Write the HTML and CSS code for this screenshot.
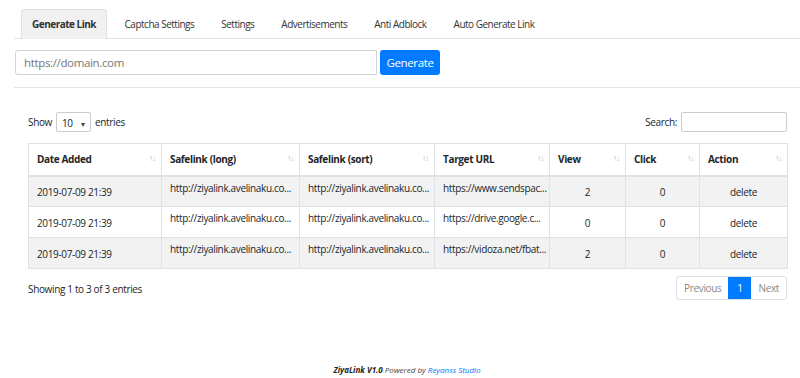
FILE: index.html
```html
<!DOCTYPE html>
<html>
<head>
<meta charset="utf-8">
<link rel="stylesheet" href="styles.css">
</head>
<body>
<div class="page">
  <ul class="tabs">
    <li class="tab active">Generate Link</li>
    <li class="tab">Captcha Settings</li>
    <li class="tab">Settings</li>
    <li class="tab">Advertisements</li>
    <li class="tab">Anti Adblock</li>
    <li class="tab">Auto Generate Link</li>
  </ul>
  <div class="gen-row">
    <div class="url-input">https://domain.com</div>
    <div class="btn-generate">Generate</div>
  </div>
  <div class="divider"></div>
  <div class="dt">
    <div class="dt-top">
      <div class="length">Show <span class="select">10 <span class="caret">&#9662;</span></span> entries</div>
      <div class="search">Search: <span class="search-input"></span></div>
    </div>
    <table class="grid">
      <colgroup>
        <col class="c1"><col class="c2"><col class="c3"><col class="c4"><col class="c5"><col class="c6"><col class="c7">
      </colgroup>
      <thead>
        <tr>
          <th><span>Date Added</span><span class="sort">↑↓</span></th>
          <th><span>Safelink (long)</span><span class="sort">↑↓</span></th>
          <th><span>Safelink (sort)</span><span class="sort">↑↓</span></th>
          <th><span>Target URL</span><span class="sort">↑↓</span></th>
          <th><span>View</span><span class="sort">↑↓</span></th>
          <th><span>Click</span><span class="sort">↑↓</span></th>
          <th><span>Action</span><span class="sort">↑↓</span></th>
        </tr>
      </thead>
      <tbody>
        <tr class="odd">
          <td class="date">2019-07-09 21:39</td>
          <td class="url">http://ziyalink.avelinaku.co...</td>
          <td class="url">http://ziyalink.avelinaku.co...</td>
          <td class="url">https://www.sendspac...</td>
          <td class="num">2</td>
          <td class="num">0</td>
          <td class="num">delete</td>
        </tr>
        <tr>
          <td class="date">2019-07-09 21:39</td>
          <td class="url">http://ziyalink.avelinaku.co...</td>
          <td class="url">http://ziyalink.avelinaku.co...</td>
          <td class="url">https://drive.google.c...</td>
          <td class="num">0</td>
          <td class="num">0</td>
          <td class="num">delete</td>
        </tr>
        <tr class="odd">
          <td class="date">2019-07-09 21:39</td>
          <td class="url">http://ziyalink.avelinaku.co...</td>
          <td class="url">http://ziyalink.avelinaku.co...</td>
          <td class="url">https://vidoza.net/fbat...</td>
          <td class="num">2</td>
          <td class="num">0</td>
          <td class="num">delete</td>
        </tr>
      </tbody>
    </table>
    <div class="dt-bottom">
      <div class="info">Showing 1 to 3 of 3 entries</div>
      <div class="pager">
        <span class="pg">Previous</span><span class="pg current">1</span><span class="pg">Next</span>
      </div>
    </div>
  </div>
  <div class="footer"><b>ZiyaLink V1.0</b> Powered by <span class="brand">Reyanss Studio</span></div>
</div>
</body>
</html>
```
FILE: styles.css
```css
* { box-sizing: border-box; }
html, body { margin: 0; padding: 0; background: #fff; }
body {
  font-family: "Open Sans", "Noto Sans", sans-serif;
  font-size: 10px;
  letter-spacing: -0.35px;
  color: #212529;
  width: 800px;
  height: 378px;
  overflow: hidden;
}
.page { padding-top: 9px; }
.tabs {
  list-style: none;
  margin: 0 0 0 14px;
  padding: 0 0 0 7px;
  display: flex;
  border-bottom: 1px solid #dee2e6;
  height: 30px;
  letter-spacing: -0.5px;
}
.tab {
  height: 30px;
  padding: 0 12.5px;
  line-height: 28px;
  border: 1px solid transparent;
  border-bottom: none;
  border-radius: 3px 3px 0 0;
  color: #333;
}
.tab.active {
  background: #f1f1f1;
  border-color: #dee2e6;
  font-weight: 700;
  padding: 0 10px;
  margin-right: 4px;
}
.gen-row {
  display: flex;
  margin: 11px 0 0 15px;
  height: 25px;
}
.url-input {
  width: 362px;
  height: 25px;
  border: 1px solid #ced4da;
  border-radius: 3px 0 0 3px;
  color: #777;
  font-size: 11.5px;
  line-height: 23px;
  padding-left: 8px;
}
.btn-generate {
  margin-left: 3px;
  width: 60px;
  height: 25px;
  background: #007bff;
  color: #fff;
  border-radius: 3px;
  font-size: 11.5px;
  line-height: 25px;
  text-align: center;
}
.divider {
  margin: 12px 0 0 14px;
  border-top: 1px solid #e5e5e5;
}
.dt { padding: 24px 13px 0 28px; }
.dt-top {
  display: flex;
  justify-content: space-between;
  align-items: center;
  height: 20px;
}
.length { display: flex; align-items: center; gap: 4px; }
.select {
  display: inline-flex;
  align-items: center;
  justify-content: space-between;
  width: 35px;
  height: 20px;
  border: 1px solid #ccc;
  border-radius: 2px;
  padding: 2px 5px 0 5px;
  font-size: 10px;
}
.caret { font-size: 8px; color: #444; }
.search { display: flex; align-items: center; gap: 4px; }
.search-input {
  width: 106px;
  height: 20px;
  border: 1px solid #ccc;
  border-radius: 2px;
}
.grid {
  margin-top: 11px;
  width: 759px;
  border-collapse: collapse;
  table-layout: fixed;
}
.c1 { width: 133px; }
.c2 { width: 138px; }
.c3 { width: 135px; }
.c4 { width: 115px; }
.c5 { width: 76px; }
.c6 { width: 74px; }
.c7 { width: 88px; }
.grid th, .grid td { border: 1px solid #dee2e6; }
.grid th {
  height: 32px;
  text-align: left;
  font-weight: 700;
  padding: 0 6px 0 8px;
  border-bottom: 2px solid #dee2e6;
  color: #212529;
}
.sort {
  float: right;
  color: #bbb;
  font-weight: 400;
  font-size: 8px;
  letter-spacing: -1px;
}
.grid td {
  height: 31px;
  padding: 0 8px;
  white-space: nowrap;
  overflow: hidden;
}
.grid tr.odd td { background: #f2f2f2; }
.grid td.date { vertical-align: middle; padding-top: 1px; }
.grid td.url { vertical-align: top; padding-top: 4px; }
.grid td.num { text-align: center; vertical-align: middle; padding-top: 2px; }
.dt-bottom {
  display: flex;
  justify-content: space-between;
  align-items: center;
  margin-top: 7px;
}
.info { padding-top: 2px; }
.pager {
  display: flex;
  border: 1px solid #dee2e6;
  border-radius: 3px;
  height: 24px;
  overflow: hidden;
}
.pg {
  line-height: 22px;
  color: #888;
  padding: 0 7px;
}
.pg.current {
  background: #007bff;
  color: #fff;
  width: 23px;
  padding: 0;
  text-align: center;
}
.footer {
  margin-top: 64px;
  padding-left: 14px;
  text-align: center;
  font-style: italic;
  font-size: 8px;
  letter-spacing: 0;
  color: #444;
}
.footer b { color: #222; }
.brand { color: #007bff; }
```
